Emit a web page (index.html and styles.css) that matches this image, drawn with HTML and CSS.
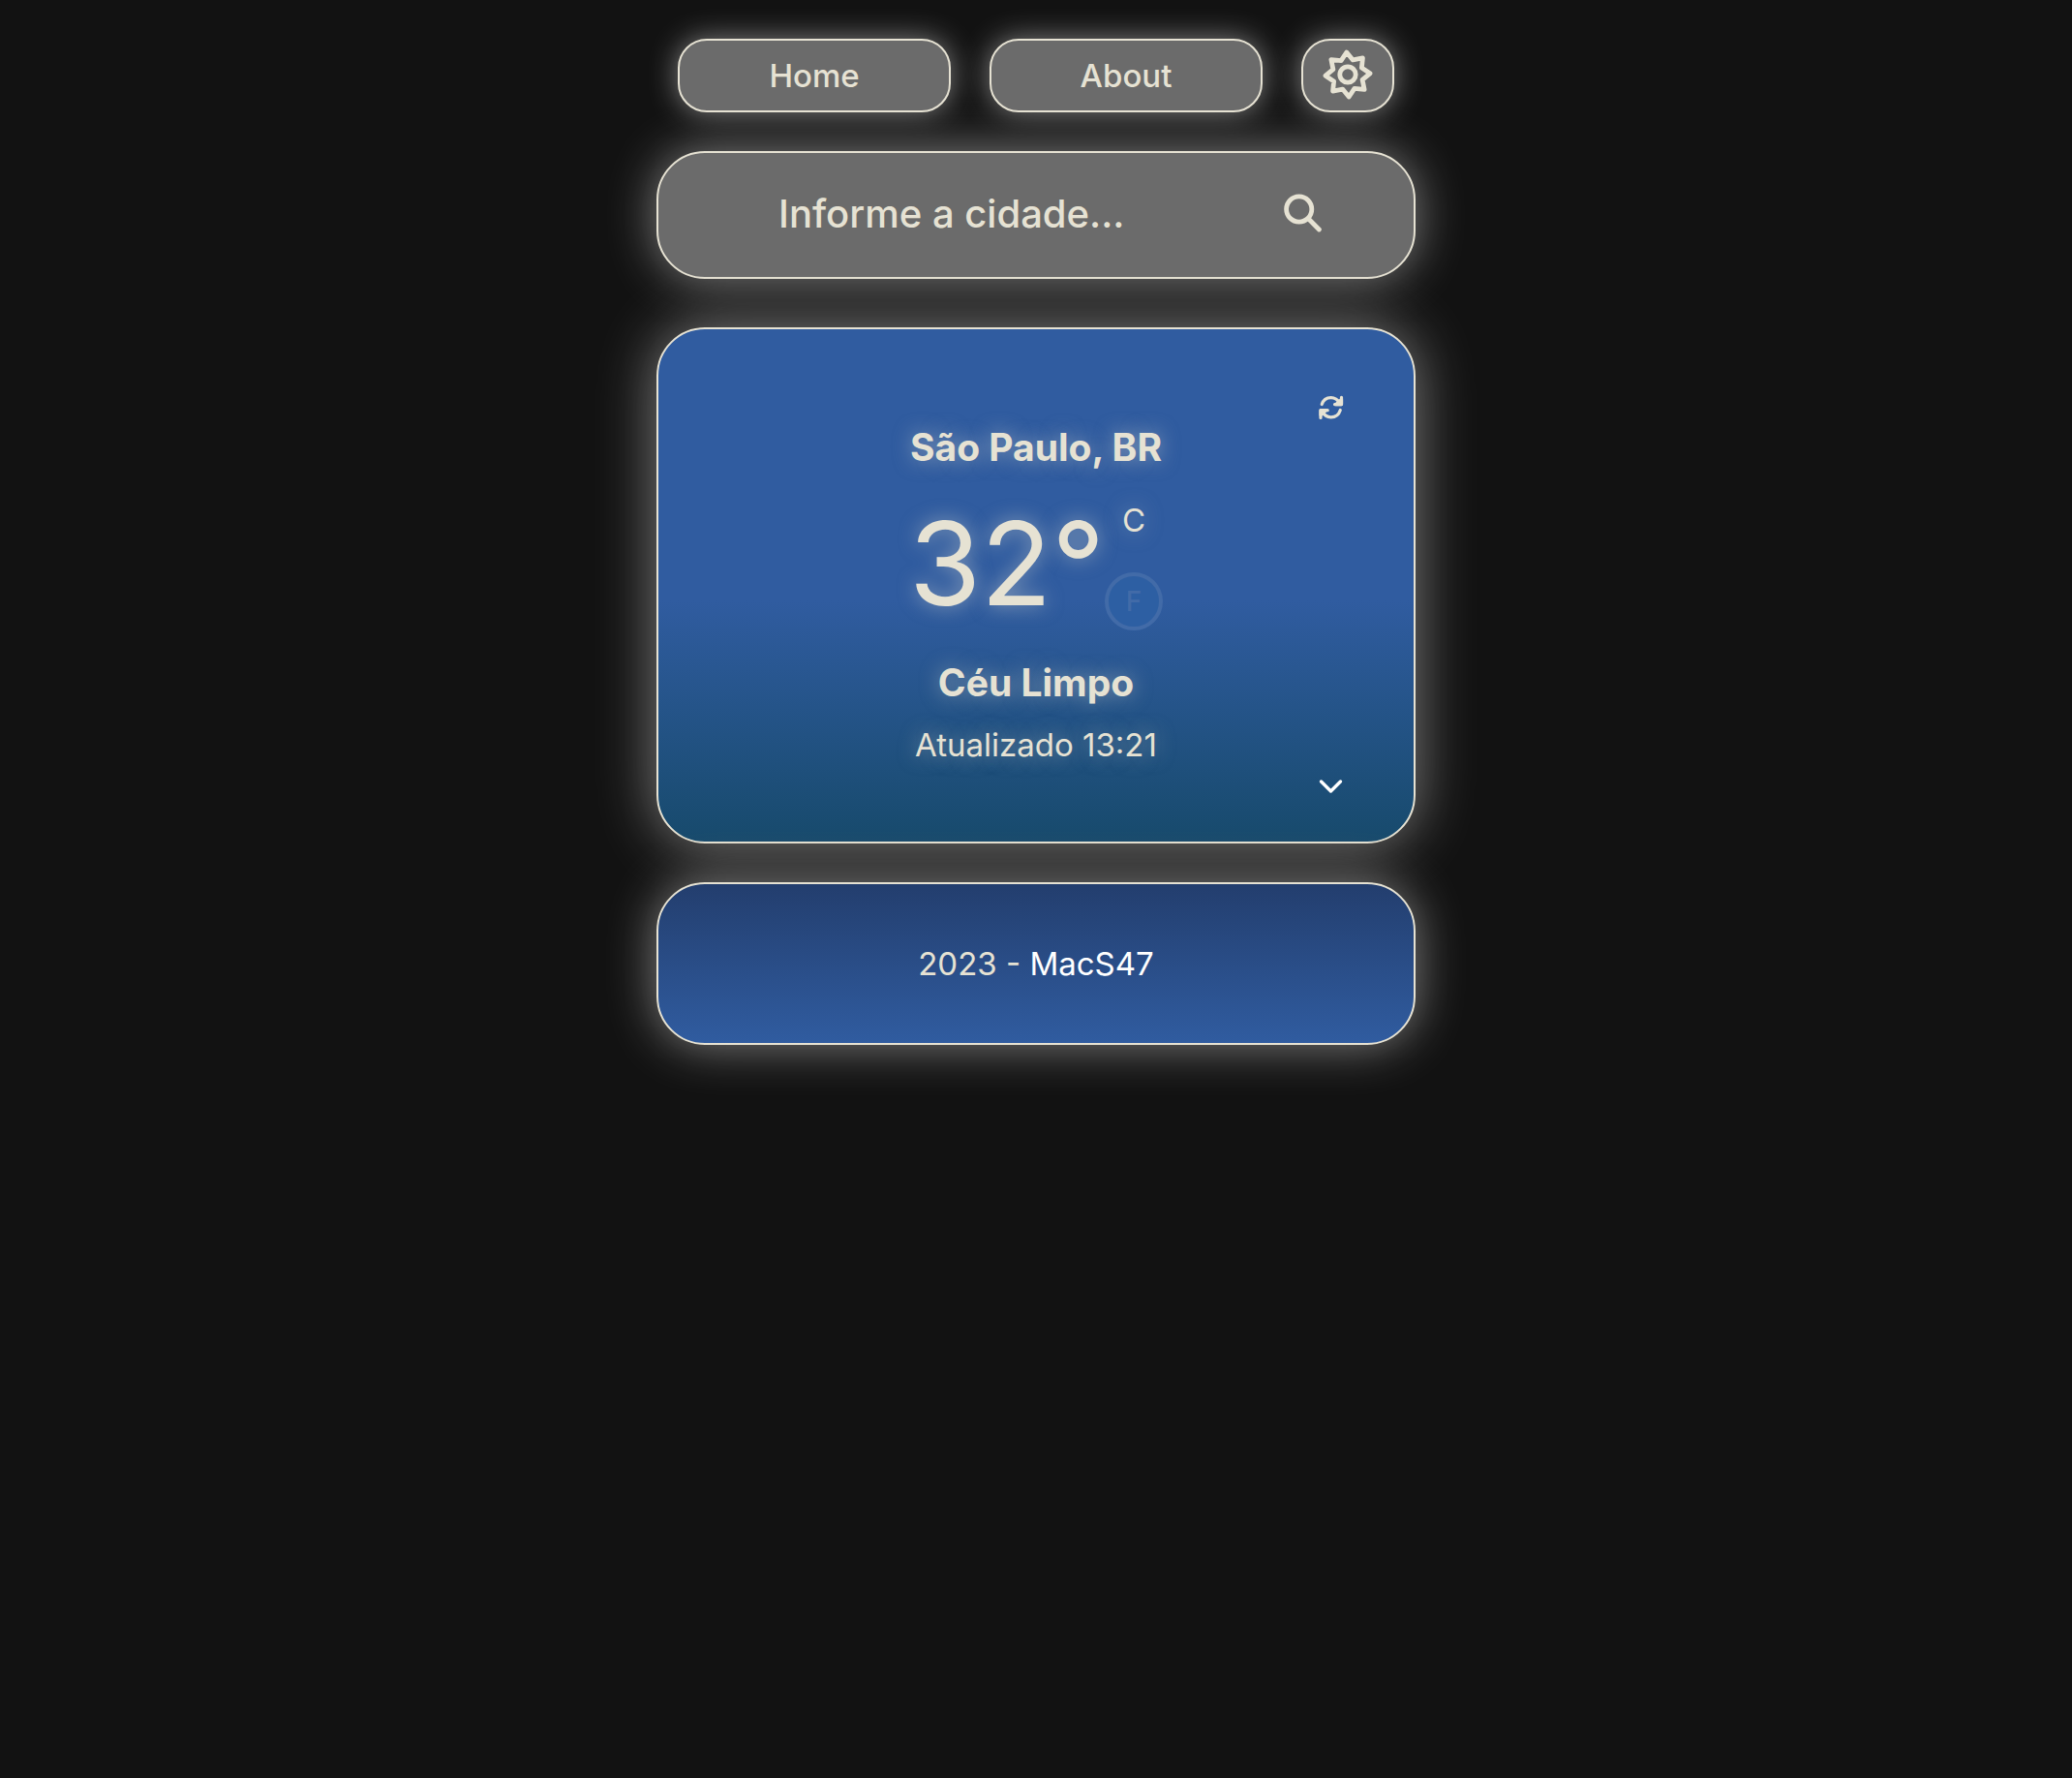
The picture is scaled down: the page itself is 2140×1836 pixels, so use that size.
FILE: index.html
```html
<!DOCTYPE html>
<html lang="pt-BR">
<head>
<meta charset="utf-8">
<meta name="viewport" content="width=device-width, initial-scale=1">
<title>Weather</title>
<link rel="stylesheet" href="styles.css">
</head>
<body>
<div class="app">
  <nav class="nav">
    <button class="nav-button" type="button">Home</button>
    <button class="nav-button" type="button">About</button>
    <button class="nav-button nav-theme" type="button" aria-label="Tema">
      <svg width="54" height="54" viewBox="-27 -26 54 54" fill="none" stroke="currentColor" stroke-width="4.8" stroke-linejoin="round"><path d="M-1.2-23 5.3-15.1 15.4-17.1 14.4-6.9 23-1.2 15.1 5.3 17.1 15.4 6.9 14.4 1.2 23-5.3 15.1-15.4 17.1-14.4 6.9-23 1.2-15.1-5.3-17.1-15.4-6.9-14.4Z"/><circle r="8.2"/></svg>
    </button>
  </nav>

  <form class="search">
    <input class="search-input" type="text" placeholder="Informe a cidade..." aria-label="Informe a cidade">
    <button class="icon-button" type="submit" aria-label="Buscar">
      <svg width="40" height="40" viewBox="0 0 40 40" fill="none" stroke="currentColor" stroke-width="4.8" stroke-linecap="round"><circle cx="15.7" cy="16" r="13.1"/><path d="M25.5 26 36.4 37"/></svg>
    </button>
  </form>

  <main class="card">
    <button class="icon-button card-action" type="button" aria-label="Atualizar">
      <svg width="26" height="26" viewBox="0 0 26 26" fill="none" stroke="currentColor" stroke-width="3.2" stroke-linecap="round" stroke-linejoin="round"><path d="M3.2 9.6C4.6 5.2 8.4 2.6 12.7 2.600c4.400 0 7.200 2.400 9.600 6"/><path d="M23.500 2.300v7.300h-7"/><path d="M22.300 15.500c-1.400 4.400-5.200 7.300-9.700 7.300-4.300 0-7.200-2.600-9.300-6.200"/><path d="M2 23.400v-7.700h7.200"/><path d="M23.500 4.500v5.100h-6z" fill="currentColor"/><path d="M2 20.500v-4.800h5.500z" fill="currentColor"/></svg>
    </button>
    <h1 class="city">São Paulo, BR</h1>
    <div class="temperature">
      <span class="degrees">32°</span>
      <div class="units">
        <span class="unit">C</span>
        <button class="unit-switch" type="button">F</button>
      </div>
    </div>
    <h2 class="condition">Céu Limpo</h2>
    <p class="updated">Atualizado 13:21</p>
    <button class="icon-button card-action card-expand" type="button" aria-label="Mais detalhes">
      <svg width="26" height="26" viewBox="0 0 26 26" fill="none" stroke="currentColor" stroke-width="3.4" stroke-linecap="round" stroke-linejoin="round"><path d="M2.500 8 12.500 18 22.500 8"/></svg>
    </button>
  </main>

  <footer class="footer">
    <p>2023 - <a class="author" href="#">MacS47</a></p>
  </footer>
</div>
</body>
</html>
```
FILE: styles.css
```css
* {
  box-sizing: border-box;
  margin: 0;
  padding: 0;
}

:root {
  --cream: #e6e2d3;
  --gray: #6b6b6b;
  --glow: #828282;
}

body {
  min-height: 100vh;
  background: #121212;
  color: var(--cream);
  font-family: Inter, "Noto Sans", sans-serif;
  font-size: 33px;
  line-height: 40px;
}

button,
input {
  font: inherit;
  color: inherit;
  background: none;
  border: none;
}

button {
  cursor: pointer;
}

svg {
  display: block;
}

.app {
  max-width: 784px;
  margin: 0 auto;
  padding: 40px 0;
}

.nav {
  display: flex;
  gap: 40px;
  padding: 0 22px;
}

.nav-button {
  flex: 1;
  display: flex;
  align-items: center;
  justify-content: center;
  height: 76px;
  background: var(--gray);
  border: 2px solid var(--cream);
  border-radius: 30px;
  box-shadow: 0 0 30px var(--glow);
  font-weight: 500;
}

.nav-theme {
  flex: 0 0 96px;
}

.search,
.card,
.footer {
  border: 2px solid var(--cream);
  border-radius: 50px;
  box-shadow: 0 0 50px var(--glow);
}

.search {
  display: flex;
  align-items: center;
  justify-content: space-between;
  margin-top: 40px;
  padding: 36px 94px 40px 124px;
  background: var(--gray);
}

.search-input {
  flex: 1;
  min-width: 0;
  height: 52px;
  font-size: 40px;
  font-weight: 500;
  outline: none;
}

.search-input::placeholder {
  color: var(--cream);
  opacity: 1;
}

.icon-button {
  flex: none;
}

.card {
  display: flex;
  flex-direction: column;
  align-items: center;
  margin-top: 50px;
  padding: 68px 72px 44px;
  background: linear-gradient(#305ca0 53%, #174a6c);
  box-shadow: 0 0 60px var(--glow);
  text-shadow: 0 0 20px rgba(230, 226, 211, 0.5);
}

.card-action {
  align-self: flex-end;
}

.card-expand {
  margin-top: 10px;
  color: #fff;
}

.city {
  font-size: 39px;
  line-height: 56px;
}

.temperature {
  display: flex;
  align-items: center;
  height: 148px;
  margin-top: 20px;
}

.degrees {
  align-self: flex-start;
  font-size: 120px;
  line-height: 144px;
}

.units {
  display: flex;
  flex-direction: column;
  align-items: center;
  gap: 34px;
}

.unit-switch {
  width: 60px;
  height: 60px;
  border: 4px solid #426ba8;
  border-radius: 50%;
  background: #2d5fa3;
  color: #426ba8;
  font-size: 28px;
  font-weight: 500;
  text-shadow: none;
}

.condition {
  margin-top: 22px;
  font-size: 39px;
  line-height: 50px;
}

.updated {
  margin-top: 19px;
}

.footer {
  margin-top: 40px;
  padding: 62px 40px;
  background: linear-gradient(#233e6e, #305ca0);
  text-align: center;
}

.author {
  color: #fff;
  text-decoration: none;
}
```
